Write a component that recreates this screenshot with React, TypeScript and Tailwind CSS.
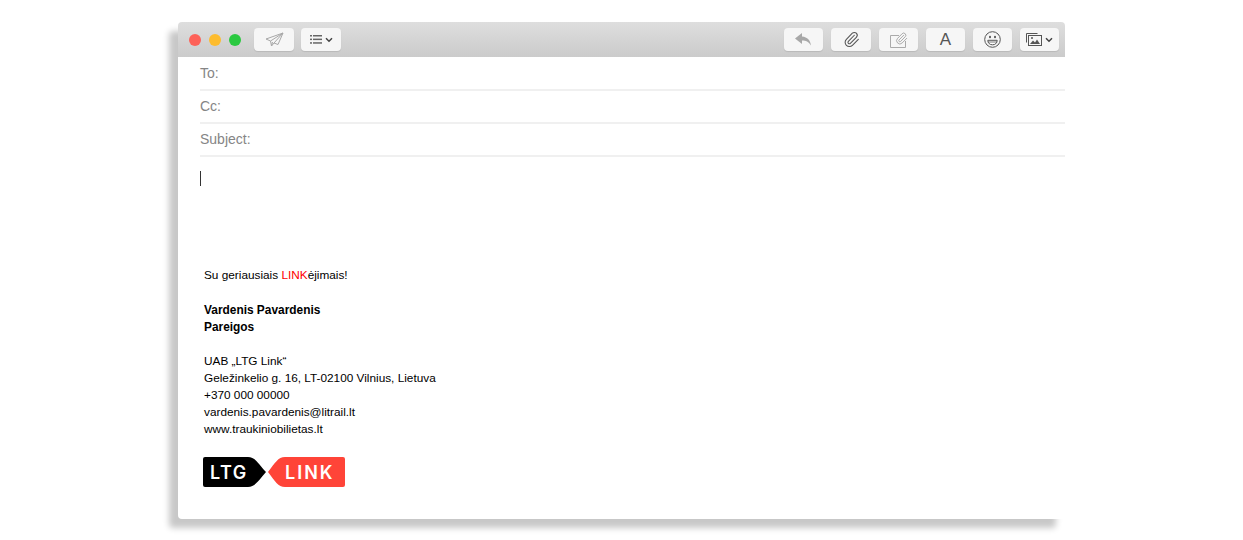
import { Paperclip } from 'lucide-react'
import type { ReactNode } from 'react'

function ToolButton({ width, children }: { width: string; children: ReactNode }) {
  return (
    <div className={`${width} h-[23px] flex items-center justify-center rounded-[4px] bg-[#f6f6f6] shadow-[0_1px_1px_rgba(0,0,0,0.1)]`}>
      {children}
    </div>
  )
}

function Chevron() {
  return (
    <svg width="8" height="6" viewBox="0 0 8 6" fill="none" stroke="#444" strokeWidth="1.5">
      <path d="M1 1.2l3 3 3-3" />
    </svg>
  )
}

function SendIcon() {
  return (
    <svg width="19" height="15" viewBox="0 0 19 15" fill="none" stroke="#a8a8a8" strokeWidth="1" strokeLinejoin="round">
      <path d="M18 1L1 7l4.5 2L18 1zM5.5 9l1 5 2.5-3M18 1L9 11l4 1.5L18 1zM6.5 14l1-4" />
    </svg>
  )
}

function ListIcon() {
  return (
    <svg width="12" height="9" viewBox="0 0 12 9" fill="#666">
      <rect x="0" y="0" width="2" height="1.5" />
      <rect x="3" y="0" width="9" height="1.5" />
      <rect x="0" y="3.6" width="2" height="1.5" />
      <rect x="3" y="3.6" width="9" height="1.5" />
      <rect x="0" y="7.2" width="2" height="1.5" />
      <rect x="3" y="7.2" width="9" height="1.5" />
    </svg>
  )
}

function ReplyIcon() {
  return (
    <svg width="17" height="13" viewBox="0 0 17 13" fill="#a8a8a8">
      <path d="M7 0L0 5.5 7 11V7.5c4 0 6.5 1.2 9 5-.6-5-3.5-8.5-9-9V0z" />
    </svg>
  )
}

function AttachPhotoIcon() {
  return (
    <span className="relative block w-[19px] h-[16px]">
      <svg width="19" height="16" viewBox="0 0 19 16" fill="none" stroke="#aaaaaa" strokeWidth="1">
        <path d="M10 3.5H1.5v12h15V9" />
      </svg>
      <Paperclip size={13} strokeWidth={1.6} color="#a0a0a0" className="absolute right-0 top-0" />
    </span>
  )
}

function SmileIcon() {
  return (
    <svg width="17" height="17" viewBox="0 0 17 17" fill="none" stroke="#555" strokeWidth="1">
      <circle cx="8.5" cy="8.5" r="7.8" />
      <ellipse cx="6" cy="6" rx="1" ry="1.3" fill="#555" stroke="none" />
      <ellipse cx="11" cy="6" rx="1" ry="1.3" fill="#555" stroke="none" />
      <path d="M3.8 9.3h9.4c0 2.8-2 4.5-4.7 4.5S3.8 12.1 3.8 9.3z" fill="#fff" />
      <path d="M4 11h9" strokeWidth="0.8" />
    </svg>
  )
}

function PhotosIcon() {
  return (
    <svg width="16" height="13" viewBox="0 0 16 13" fill="none" stroke="#555" strokeWidth="1">
      <path d="M.5 9.5V.5h11" />
      <rect x="2.5" y="2.5" width="13" height="10" />
      <path d="M4 11l3-3.5 2 2 2-3 3 4.5z" fill="#555" stroke="none" />
      <circle cx="6" cy="5" r="1" fill="#555" stroke="none" />
    </svg>
  )
}

function Field({ label }: { label: string }) {
  return (
    <div className="h-[33px] ml-[22px] flex items-center border-b-2 border-[#f0f0f0] text-[14px] text-[#858585]">
      {label}
    </div>
  )
}

function Logo() {
  return (
    <svg width="142" height="30" viewBox="0 0 142 30" className="block">
      <path d="M2 0H45C52 0 55 6 63 15 55 24 52 30 45 30H2Q0 30 0 28V2Q0 0 2 0z" fill="#000" />
      <path d="M140 0H82C75 0 72 6 65 15 72 24 75 30 82 30H140Q142 30 142 28V2Q142 0 140 0z" fill="#ff4438" />
      <text x="7" y="21.5" fill="#fff" fontFamily="Inter, sans-serif" fontSize="18" fontWeight="600" letterSpacing="1.4">LTG</text>
      <text x="82" y="21.5" fill="#fff" fontFamily="Inter, sans-serif" fontSize="18" fontWeight="600" letterSpacing="2">LINK</text>
    </svg>
  )
}

export default function App() {
  return (
    <div className="w-[1243px] h-[540px] bg-white pl-[178px] pt-[22px] overflow-hidden font-['Liberation_Sans',Arial,sans-serif]">
      <div className="w-[887px] h-[497px] bg-white rounded-[4px] shadow-[-9px_9px_6px_rgba(0,0,0,0.22)] flex flex-col">
        <div className="h-[35px] rounded-t-[4px] bg-gradient-to-b from-[#dedede] to-[#cbcbcb] flex items-center pl-[11px] pr-[6px]">
          <div className="flex gap-[8px]">
            <span className="w-[12px] h-[12px] rounded-full bg-[#fd6158]" />
            <span className="w-[12px] h-[12px] rounded-full bg-[#fdbc2e]" />
            <span className="w-[12px] h-[12px] rounded-full bg-[#2ac940]" />
          </div>
          <div className="ml-[13px] flex gap-[7px]">
            <ToolButton width="w-[40px]"><SendIcon /></ToolButton>
            <ToolButton width="w-[40px]">
              <span className="flex items-center gap-[3px]"><ListIcon /><Chevron /></span>
            </ToolButton>
          </div>
          <div className="ml-auto flex gap-[8px]">
            <ToolButton width="w-[39px]"><ReplyIcon /></ToolButton>
            <ToolButton width="w-[40px]"><Paperclip size={17} strokeWidth={1.5} color="#555" /></ToolButton>
            <ToolButton width="w-[39px]"><AttachPhotoIcon /></ToolButton>
            <ToolButton width="w-[39px]"><span className="text-[17px] leading-none text-[#555]">A</span></ToolButton>
            <ToolButton width="w-[39px]"><SmileIcon /></ToolButton>
            <ToolButton width="w-[39px]">
              <span className="flex items-center gap-[3px]"><PhotosIcon /><Chevron /></span>
            </ToolButton>
          </div>
        </div>
        <div className="mt-[1px]">
          <Field label="To:" />
          <Field label="Cc:" />
          <Field label="Subject:" />
        </div>
        <div className="ml-[22px] mt-[14px] w-[1px] h-[15px] bg-[#333]" />
        <div className="ml-[26px] mt-[81px] text-[11.8px] leading-[17px] text-black">
          <p>Su geriausiais <span className="text-[#ff0000]">LINK</span>ėjimais!</p>
          <p className="mt-[18px] font-bold text-[11.9px]">Vardenis Pavardenis</p>
          <p className="font-bold text-[11.9px]">Pareigos</p>
          <p className="mt-[17px]">UAB „LTG Link“</p>
          <p>Geležinkelio g. 16, LT-02100 Vilnius, Lietuva</p>
          <p>+370 000 00000</p>
          <p>vardenis.pavardenis@litrail.lt</p>
          <p>www.traukiniobilietas.lt</p>
          <div className="mt-[19px] -ml-[1px]"><Logo /></div>
        </div>
      </div>
    </div>
  )
}
